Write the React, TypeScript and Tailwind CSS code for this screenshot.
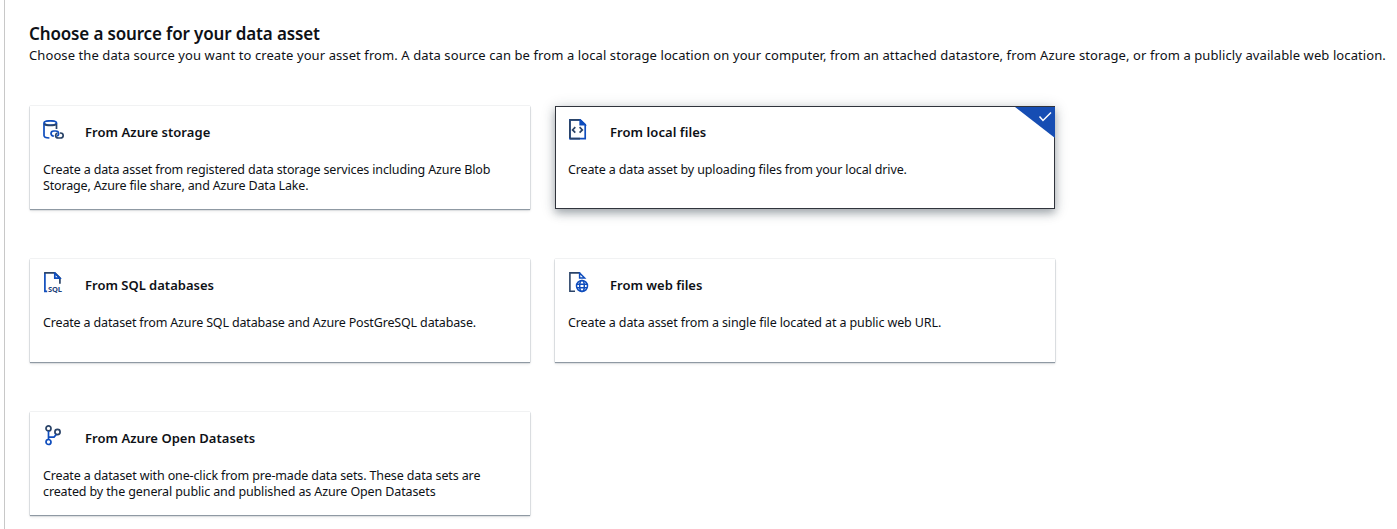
import type { ReactNode } from "react";

const BLUE = "#0f4dbd";
const DARK = "#2b4468";

function StorageIcon() {
  return (
    <svg className="mt-px" width="22" height="20" viewBox="0 0 22 20" fill="none" strokeWidth="1.7">
      <path d="M1 3.200v12.200c0 1.500 2 2.400 5.400 2.600" stroke={BLUE} />
      <path d="M13.500 3.200V9" stroke={DARK} />
      <ellipse cx="7.250" cy="3" rx="6.250" ry="2.200" stroke={BLUE} />
      <path d="M1.500 4.200c1.600 1.700 9.900 1.700 11.500 0" stroke={DARK} />
      <path d="M10.800 16.200c-1.800 0-2.800-1.200-2.800-2.600s1-2.600 2.800-2.600h2c1.800 0 2.800 1.200 2.800 2.600s-1 2.400-2 2.400" stroke={BLUE} />
      <path d="M17 13h.4c1.800 0 2.800 1.200 2.800 2.500S19.200 18 17.400 18h-2c-1.800 0-2.800-1.200-2.800-2.500 0-1.200.8-2.100 1.800-2.400" stroke={DARK} />
    </svg>
  );
}

function CodeFileIcon() {
  return (
    <svg className="ml-px" width="18" height="21" viewBox="0 0 18 21" fill="none" strokeWidth="1.7">
      <path d="M11.200.9H.9v18.800h15.300V5.700z" stroke={BLUE} />
      <path d="M.9 1.500v17.500M.5.9h10.500M1 19.700h10" stroke={DARK} />
      <path d="M11 .9v5h5.300z" stroke={BLUE} fill={BLUE} strokeWidth="1.300" />
      <path d="M6.300 8.200L3.600 10.900l2.700 2.700M10.600 8.200l2.700 2.700-2.700 2.700" stroke={DARK} />
    </svg>
  );
}

function SqlIcon() {
  return (
    <svg className="ml-px" width="19" height="21" viewBox="0 0 19 21" fill="none" strokeWidth="1.7">
      <path d="M3.200 19.300H.9V.9" stroke={BLUE} />
      <path d="M.1.9h10.700l5.100 4.900v6" stroke={DARK} />
      <path d="M10.800 1.200v5h5z" stroke={BLUE} />
      <text x="4" y="19.600" fontSize="7.500" fontWeight="700" fill="#1e437c" textLength="14" fontFamily="Noto Sans, sans-serif">
        SQL
      </text>
    </svg>
  );
}

function WebFileIcon() {
  return (
    <svg className="ml-px" width="20" height="21" viewBox="0 0 20 21" fill="none" strokeWidth="1.500">
      <path d="M6 19.300H.9V.9h10.300" stroke={DARK} strokeWidth="1.600" />
      <path d="M10.600 1v5h5z" stroke={BLUE} />
      <circle cx="13" cy="14" r="5.500" stroke={BLUE} />
      <ellipse cx="13" cy="14" rx="2.300" ry="5.500" stroke={BLUE} />
      <path d="M8 12.300h10M8 15.700h10" stroke={BLUE} />
    </svg>
  );
}

function BranchIcon() {
  return (
    <svg className="ml-[2px]" width="17" height="21" viewBox="0 0 17 21" fill="none" strokeWidth="1.700">
      <circle cx="3.500" cy="3.400" r="2.500" stroke={DARK} />
      <circle cx="3.500" cy="17" r="2.500" stroke={BLUE} />
      <circle cx="12.500" cy="7" r="2.600" stroke={DARK} />
      <path d="M3.500 6v8.400M3.500 12.200h5.500l2.300-2.800" stroke={BLUE} />
    </svg>
  );
}

interface CardProps {
  icon: ReactNode;
  title: string;
  titleClass: string;
  lines: { text: string; className: string }[];
  selected?: boolean;
}

function SourceCard({ icon, title, titleClass, lines, selected }: CardProps) {
  return (
    <article
      className={
        selected
          ? "relative h-[103px] bg-white shadow-[inset_0_0_0_1px_#30343c,0_4px_8px_rgba(40,55,65,0.35),0_2px_14px_rgba(40,55,65,0.2)]"
          : "relative h-[103px] bg-white shadow-[0_1px_1px_#8f99a3,0_0_1px_#b4b8bc,0_2px_3px_rgba(0,0,0,0.1)]"
      }
    >
      {selected && (
        <svg className="absolute top-0 right-0" width="40" height="32" viewBox="0 0 40 32">
          <path d="M0 1h40v31z" fill="#164db3" />
          <path d="M24.500 10.500l3.500 4 8-8" fill="none" stroke="#fff" strokeWidth="1.500" />
        </svg>
      )}
      <div className="flex h-[53px] pl-[13px]">
        <div className="w-[42px] shrink-0 pt-[13px]">{icon}</div>
        <h2 className={`pt-[16px] text-[13px] leading-[20px] font-semibold whitespace-nowrap ${titleClass}`}>{title}</h2>
      </div>
      <p className="pt-[3px] pl-[13px]">
        {lines.map((line) => (
          <span key={line.text} className={`block text-[12.5px] leading-[16px] whitespace-nowrap ${line.className}`}>
            {line.text}
          </span>
        ))}
      </p>
    </article>
  );
}

export default function App() {
  return (
    <div className="h-[529px] overflow-hidden bg-white pl-1 font-['Noto_Sans','Open_Sans',sans-serif] text-[#0e1116]">
      <main className="h-full border-l border-[#c8c8c8] pt-[22px] pl-6">
        <h1 className="text-[17px] leading-[24px] font-semibold tracking-[-0.147px] whitespace-nowrap">
          Choose a source for your data asset
        </h1>
        <p className="text-[13px] leading-[18px] tracking-[0.092px] whitespace-nowrap">
          Choose the data source you want to create your asset from. A data source can be from a local storage location on your
          computer, from an attached datastore, from Azure storage, or from a publicly available web location.
        </p>
        <section className="mt-[42px] ml-px grid grid-cols-[500px_500px] gap-x-[25px] gap-y-[50px]">
          <SourceCard
            icon={<StorageIcon />}
            title="From Azure storage"
            titleClass="tracking-[0.05px]"
            lines={[
              {
                text: "Create a data asset from registered data storage services including Azure Blob",
                className: "tracking-[-0.147px]",
              },
              { text: "Storage, Azure file share, and Azure Data Lake.", className: "tracking-[-0.17px]" },
            ]}
          />
          <SourceCard
            selected
            icon={<CodeFileIcon />}
            title="From local files"
            titleClass="tracking-[0.06px]"
            lines={[
              {
                text: "Create a data asset by uploading files from your local drive.",
                className: "tracking-[-0.135px]",
              },
            ]}
          />
          <SourceCard
            icon={<SqlIcon />}
            title="From SQL databases"
            titleClass="tracking-normal"
            lines={[
              {
                text: "Create a dataset from Azure SQL database and Azure PostGreSQL database.",
                className: "tracking-[-0.155px]",
              },
            ]}
          />
          <SourceCard
            icon={<WebFileIcon />}
            title="From web files"
            titleClass="tracking-normal"
            lines={[
              {
                text: "Create a data asset from a single file located at a public web URL.",
                className: "tracking-[-0.12px]",
              },
            ]}
          />
          <SourceCard
            icon={<BranchIcon />}
            title="From Azure Open Datasets"
            titleClass="tracking-[0.04px]"
            lines={[
              {
                text: "Create a dataset with one-click from pre-made data sets. These data sets are",
                className: "tracking-[-0.13px]",
              },
              {
                text: "created by the general public and published as Azure Open Datasets",
                className: "tracking-[-0.12px]",
              },
            ]}
          />
        </section>
      </main>
    </div>
  );
}
